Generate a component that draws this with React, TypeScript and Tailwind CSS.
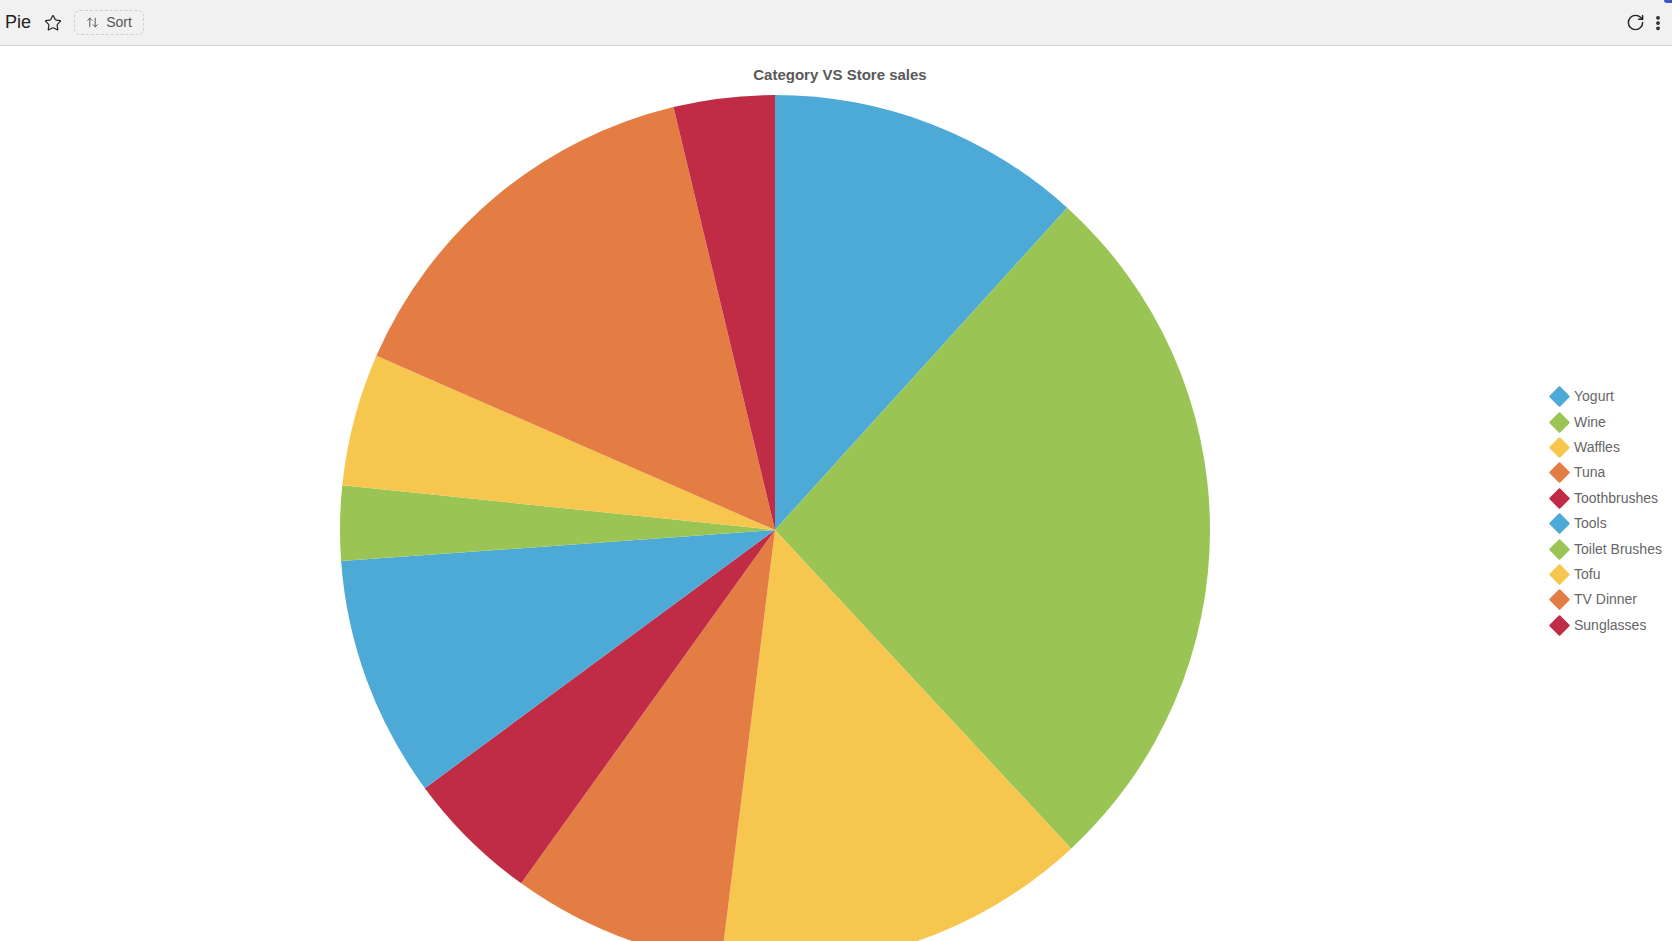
import React from "react";
import { ArrowUpDown, EllipsisVertical, RotateCw, Star } from "lucide-react";

// clockwise degrees from 12 o'clock, read off the reference
const slices = [
  { from: 0, to: 42.2, color: "#4DA9D6" },
  { from: 42.2, to: 137.1, color: "#9AC555" },
  { from: 137.1, to: 187.1, color: "#F6C64E" },
  { from: 187.1, to: 215.7, color: "#E47D44" },
  { from: 215.7, to: 233.6, color: "#C02C46" },
  { from: 233.6, to: 265.9, color: "#4DA9D6" },
  { from: 265.9, to: 275.9, color: "#9AC555" },
  { from: 275.9, to: 293.6, color: "#F6C64E" },
  { from: 293.6, to: 346.5, color: "#E47D44" },
  { from: 346.5, to: 360, color: "#C02C46" },
];

const legend = [
  { name: "Yogurt", color: "bg-[#4DA9D6]" },
  { name: "Wine", color: "bg-[#9AC555]" },
  { name: "Waffles", color: "bg-[#F6C64E]" },
  { name: "Tuna", color: "bg-[#E47D44]" },
  { name: "Toothbrushes", color: "bg-[#C02C46]" },
  { name: "Tools", color: "bg-[#4DA9D6]" },
  { name: "Toilet Brushes", color: "bg-[#9AC555]" },
  { name: "Tofu", color: "bg-[#F6C64E]" },
  { name: "TV Dinner", color: "bg-[#E47D44]" },
  { name: "Sunglasses", color: "bg-[#C02C46]" },
];

const R = 435;

function point(deg: number): string {
  const a = (deg * Math.PI) / 180;
  return `${(R + R * Math.sin(a)).toFixed(2)} ${(R - R * Math.cos(a)).toFixed(2)}`;
}

function slicePath(from: number, to: number): string {
  const large = to - from > 180 ? 1 : 0;
  return `M${R} ${R}L${point(from)}A${R} ${R} 0 ${large} 1 ${point(to)}Z`;
}

export default function App(): React.ReactNode {
  return (
    <div className="h-[941px] w-full overflow-hidden flex flex-col bg-white font-['Liberation_Sans',Arial,sans-serif]">
      {/* Toolbar */}
      <div className="relative h-[46px] shrink-0 bg-[#f1f1f1] border-b border-[#d4d4d4] flex items-center pl-[5px] pr-[5px]">
        <span className="text-[18px] text-[#222]">Pie</span>
        <Star className="w-[18px] h-[18px] ml-[13px] text-[#222]" strokeWidth={1.6} />
        <button className="ml-[12px] w-[70px] h-[25px] rounded-md border border-dashed border-[#cfcfcf] flex items-center justify-center gap-[7px] text-[14px] text-[#555]">
          <ArrowUpDown className="w-[13px] h-[13px] text-[#444]" strokeWidth={1.6} />
          Sort
        </button>
        <RotateCw className="ml-auto w-[19px] h-[19px] text-[#222]" strokeWidth={1.8} />
        <EllipsisVertical className="ml-[4px] w-[18px] h-[18px] text-[#222]" strokeWidth={3} />
        <div className="absolute right-0 top-0 w-[8px] h-[3px] rounded-bl-full bg-[#3f55c4]" />
      </div>

      {/* Chart */}
      <div className="flex-1 min-h-0 overflow-hidden">
        <div className="pt-[19px] pl-[8px] text-center text-[15px] font-bold leading-[20px] text-[#595959]">
          Category VS Store sales
        </div>
        <div className="mt-[10px] flex items-start">
          <svg width={R * 2} height={R * 2} viewBox={`0 0 ${R * 2} ${R * 2}`} className="ml-[340px] shrink-0">
            {slices.map((s) => (
              <path key={s.from} d={slicePath(s.from, s.to)} fill={s.color} />
            ))}
          </svg>
          <div className="ml-auto mt-[289px] w-[122px] shrink-0 flex flex-col">
            {legend.map((item) => (
              <div key={item.name} className="h-[25.4px] flex items-center text-[14px] text-[#666]">
                <span className={`w-[15px] h-[15px] rotate-45 rounded-[1px] ml-[2px] ${item.color}`} />
                <span className="ml-[7px] whitespace-nowrap">{item.name}</span>
              </div>
            ))}
          </div>
        </div>
      </div>
    </div>
  );
}
